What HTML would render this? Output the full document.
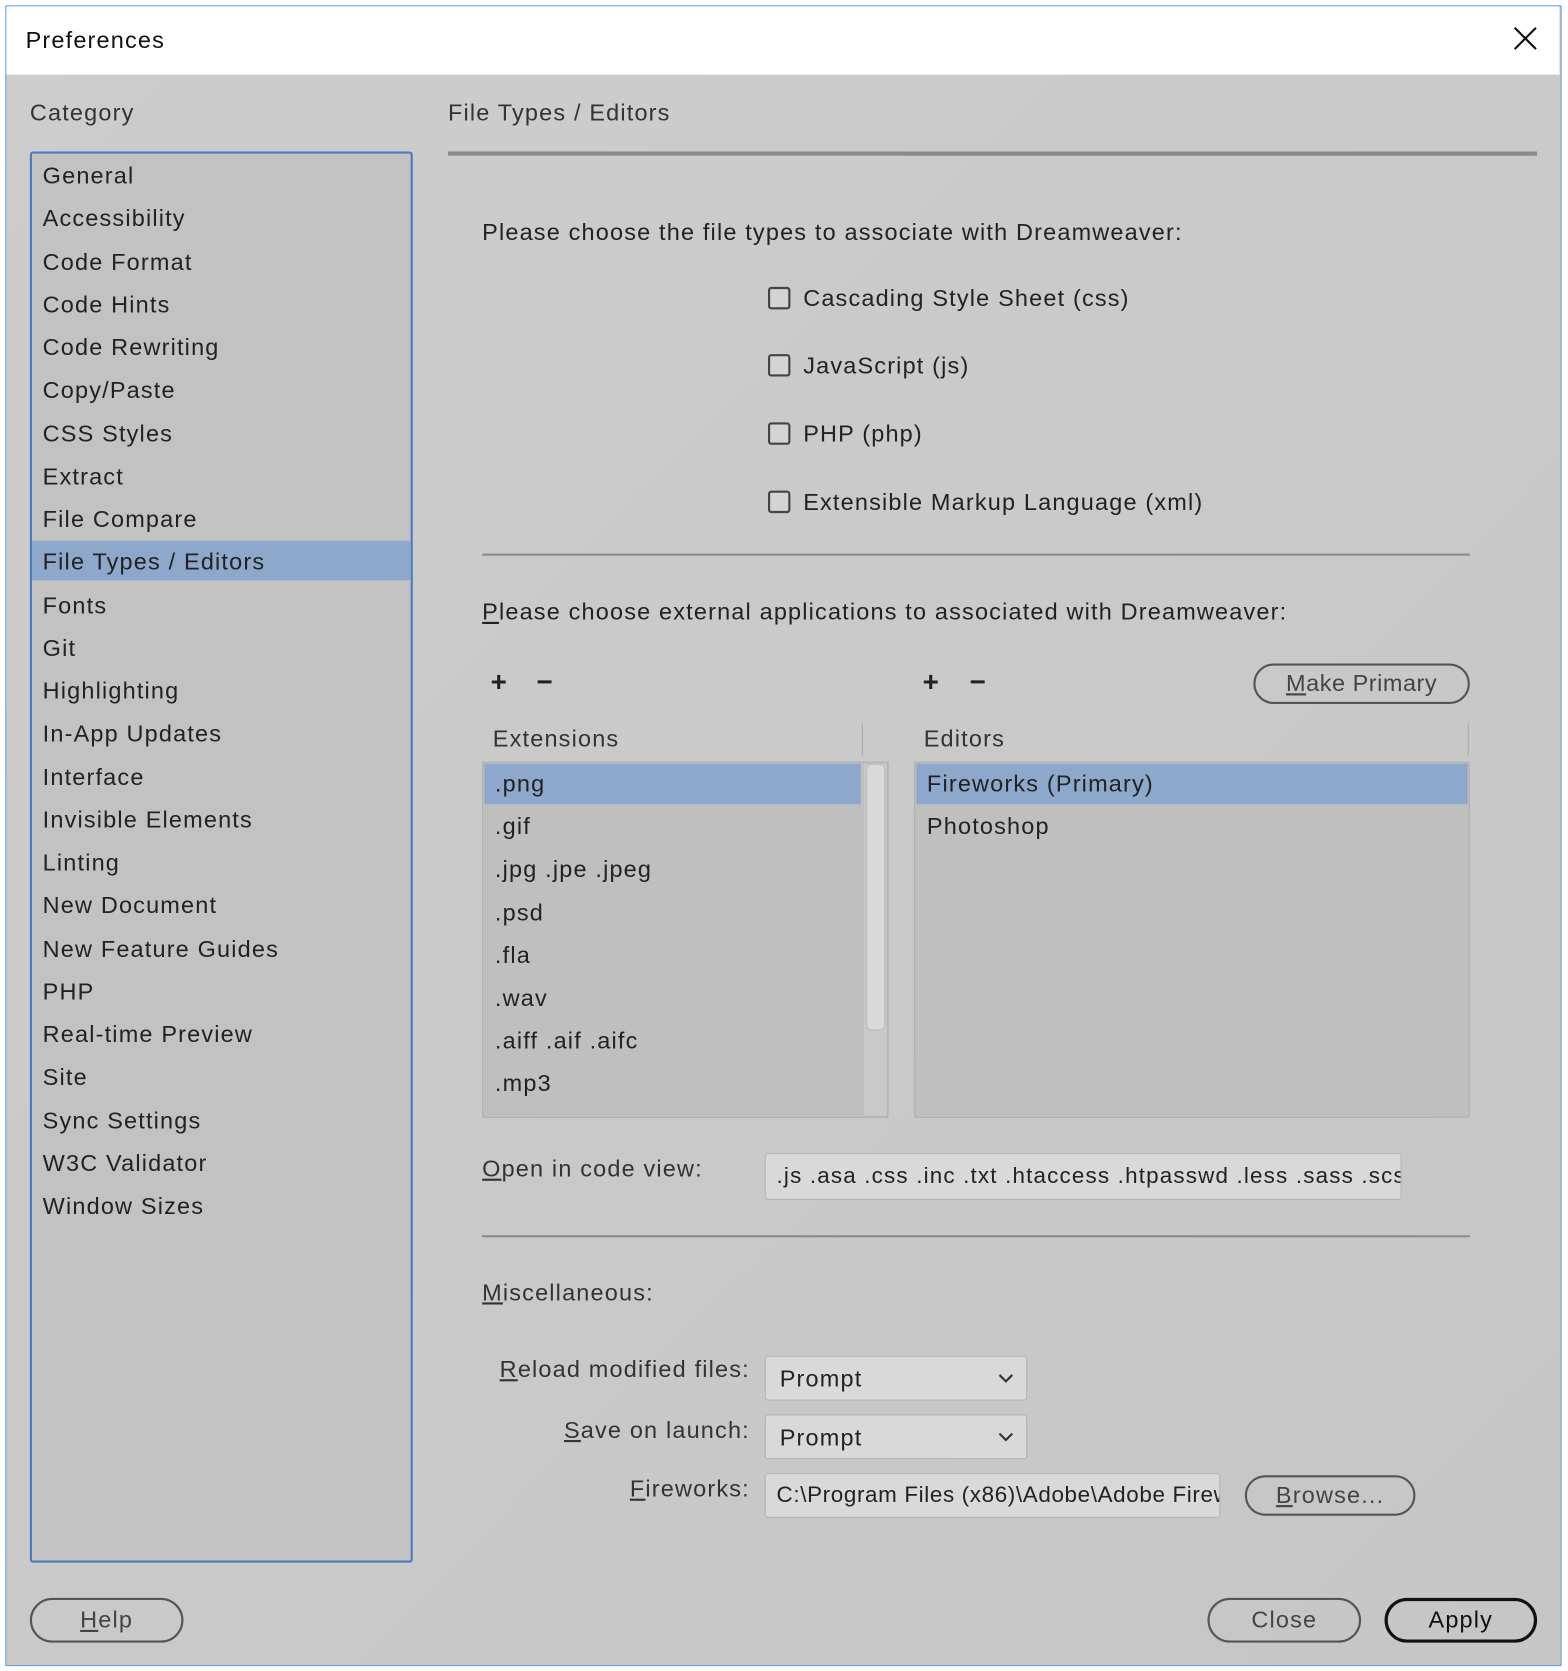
<!DOCTYPE html>
<html><head><meta charset="utf-8"><style>
html,body{margin:0;padding:0;width:1568px;height:1671px;overflow:hidden;background:#fff}
#w{position:absolute;left:0;top:0;width:1470px;height:1567px;transform:scale(1.06667);transform-origin:0 0;font-family:"Liberation Sans",sans-serif;color:#222;font-size:22px;letter-spacing:1.1px}
.a{position:absolute;white-space:nowrap;line-height:1}
.t{transform:translateY(-50%)}
.cb{position:absolute;width:21px;height:21px;border:2px solid #444;border-radius:3px;background:#d4d4d4;box-sizing:border-box}
.btn{position:absolute;border:2px solid #555;border-radius:22px;box-sizing:border-box;text-align:center;color:#444;font-size:22px}
.sep{position:absolute;height:2px;background:#8c8c8c}
u{text-decoration:underline}
.in{position:absolute;background:#d9d9d9;border:1px solid #b5b5b5;border-radius:3px;box-sizing:border-box;overflow:hidden;white-space:nowrap}
</style></head><body><div id="w">
<div style="position:absolute;left:5px;top:5px;width:1457px;height:1555px;border:1px solid #5b9bd5;background:linear-gradient(135deg,#cdcdcd,#c6c6c6)"></div>
<div style="position:absolute;left:6px;top:6px;width:1456px;height:64px;background:#fff"></div>
<div class="a t" style="left:24px;top:38px;color:#111">Preferences</div>
<svg style="position:absolute;left:1419px;top:25px" width="22" height="22"><path d="M1 1L21 21M21 1L1 21" stroke="#111" stroke-width="2"/></svg>

<div class="a t" style="left:28px;top:106px;color:#333">Category</div>
<div style="position:absolute;left:28px;top:142px;width:359px;height:1323px;border:2px solid #4a7cc0;border-radius:3px;box-sizing:border-box;background:#c2c2c2"></div>
<div style="position:absolute;left:30px;top:507px;width:355px;height:37px;background:#8da8cb"></div>
<div id="cat"></div>

<div class="a t" style="left:420px;top:106px;color:#333">File Types / Editors</div>
<div style="position:absolute;left:420px;top:142px;width:1021px;height:4px;background:#8a8a8a"></div>

<div class="a t" style="left:452px;top:218px">Please choose the file types to associate with Dreamweaver:</div>
<div class="cb" style="left:720px;top:269px"></div><div class="a t" style="left:753px;top:280px">Cascading Style Sheet (css)</div>
<div class="cb" style="left:720px;top:332px"></div><div class="a t" style="left:753px;top:343px">JavaScript (js)</div>
<div class="cb" style="left:720px;top:396px"></div><div class="a t" style="left:753px;top:407px">PHP (php)</div>
<div class="cb" style="left:720px;top:460px"></div><div class="a t" style="left:753px;top:471px">Extensible Markup Language (xml)</div>
<div class="sep" style="left:452px;top:519px;width:926px"></div>

<div class="a t" style="left:452px;top:574px"><u>P</u>lease choose external applications to associated with Dreamweaver:</div>
<div class="a t" style="left:460px;top:639px;font-weight:bold;font-size:26px">+</div>
<div class="a t" style="left:503px;top:639px;font-weight:bold;font-size:26px">−</div>
<div class="a t" style="left:865px;top:639px;font-weight:bold;font-size:26px">+</div>
<div class="a t" style="left:909px;top:639px;font-weight:bold;font-size:26px">−</div>
<div class="btn" style="left:1175px;top:622px;width:203px;height:38px;line-height:34px;letter-spacing:0.5px"><u>M</u>ake Primary</div>

<div class="a t" style="left:462px;top:693px;color:#333">Extensions</div>
<div style="position:absolute;left:808px;top:678px;width:1px;height:30px;background:#aaa"></div>
<div class="a t" style="left:866px;top:693px;color:#333">Editors</div>
<div style="position:absolute;left:1376px;top:678px;width:1px;height:30px;background:#aaa"></div>

<div style="position:absolute;left:452px;top:714px;width:381px;height:334px;background:#bfbfbf;border:1px solid #b0b0b0;box-sizing:border-box"></div>
<div style="position:absolute;left:454px;top:716px;width:353px;height:38px;background:#8da8cb"></div>
<div style="position:absolute;left:810px;top:716px;width:21px;height:330px;background:#c9c9c9"></div>
<div style="position:absolute;left:812px;top:716px;width:18px;height:250px;background:#d9d9d9;border:1px solid #bbb;border-radius:5px;box-sizing:border-box"></div>
<div id="ext"></div>

<div style="position:absolute;left:857px;top:714px;width:521px;height:334px;background:#bfbfbf;border:1px solid #b0b0b0;box-sizing:border-box"></div>
<div style="position:absolute;left:859px;top:716px;width:517px;height:38px;background:#8da8cb"></div>
<div class="a t" style="left:869px;top:735px">Fireworks (Primary)</div>
<div class="a t" style="left:869px;top:775px">Photoshop</div>

<div class="a t" style="left:452px;top:1096px;color:#333"><u>O</u>pen in code view:</div>
<div class="in" style="left:717px;top:1081px;width:597px;height:44px;line-height:42px;padding-left:10px;font-size:21px">.js .asa .css .inc .txt .htaccess .htpasswd .less .sass .scss</div>
<div class="sep" style="left:452px;top:1158px;width:926px"></div>

<div class="a t" style="left:452px;top:1212px;color:#333"><u>M</u>iscellaneous:</div>
<div class="a t" style="right:767px;top:1284px;color:#333"><u>R</u>eload modified files:</div>
<div class="in" style="left:717px;top:1271px;width:246px;height:42px;line-height:42px;padding-left:13px">Prompt</div>
<svg style="position:absolute;left:936px;top:1288px" width="14" height="9"><path d="M1 1L7 7L13 1" stroke="#333" stroke-width="2" fill="none"/></svg>
<div class="a t" style="right:767px;top:1341px;color:#333"><u>S</u>ave on launch:</div>
<div class="in" style="left:717px;top:1326px;width:246px;height:42px;line-height:42px;padding-left:13px">Prompt</div>
<svg style="position:absolute;left:936px;top:1343px" width="14" height="9"><path d="M1 1L7 7L13 1" stroke="#333" stroke-width="2" fill="none"/></svg>
<div class="a t" style="right:767px;top:1396px;color:#333"><u>F</u>ireworks:</div>
<div class="in" style="left:717px;top:1381px;width:427px;height:42px;line-height:40px;padding-left:10px;font-size:21px;letter-spacing:0.6px">C:\Program Files (x86)\Adobe\Adobe Fireworks</div>
<div class="btn" style="left:1167px;top:1383px;width:160px;height:38px;line-height:34px"><u>B</u>rowse...</div>

<div class="btn" style="left:28px;top:1498px;width:144px;height:42px;line-height:38px"><u>H</u>elp</div>
<div class="btn" style="left:1132px;top:1498px;width:144px;height:42px;line-height:38px">Close</div>
<div class="btn" style="left:1298px;top:1498px;width:143px;height:42px;line-height:36px;border:3px solid #111;color:#111">Apply</div>
</div>
<script>
var c=["General","Accessibility","Code Format","Code Hints","Code Rewriting","Copy/Paste","CSS Styles","Extract","File Compare","File Types / Editors","Fonts","Git","Highlighting","In-App Updates","Interface","Invisible Elements","Linting","New Document","New Feature Guides","PHP","Real-time Preview","Site","Sync Settings","W3C Validator","Window Sizes"];
var h="";c.forEach(function(s,i){h+='<div class="a t" style="left:40px;top:'+(165+i*40.25)+'px">'+s+'</div>'});
document.getElementById("cat").innerHTML=h;
var e=[".png",".gif",".jpg .jpe .jpeg",".psd",".fla",".wav",".aiff .aif .aifc",".mp3"];
h="";e.forEach(function(s,i){h+='<div class="a t" style="left:464px;top:'+(735+i*40.2)+'px">'+s+'</div>'});
document.getElementById("ext").innerHTML=h;
</script>
</body></html>
